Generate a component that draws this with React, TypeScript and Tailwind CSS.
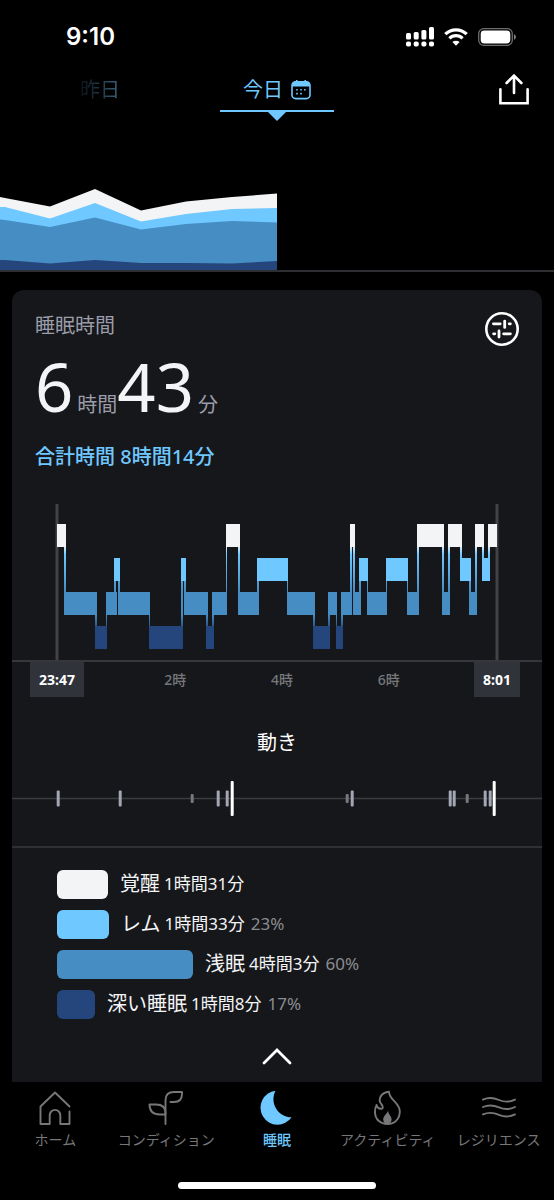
/** Sleep detail screen: day switcher, trend strip, hypnogram, movement and stage totals. */
import { clsx } from "clsx";

type Stage = "awake" | "rem" | "light" | "deep";

const STAGE_ROW: Record<Stage, number> = { awake: 0, rem: 1, light: 2, deep: 3 };

const STAGE_FILL: Record<Stage, string> = {
  awake: "fill-[#f3f4f6]",
  rem: "fill-[#6fc8ff]",
  light: "fill-[#458dc3]",
  deep: "fill-[#24467c]",
};

// [stage, start, end] on a 440 unit wide night
const SEGMENTS: Array<[Stage, number, number]> = [
  ["awake", 0, 9],
  ["light", 7, 40],
  ["deep", 38, 50],
  ["light", 49, 60],
  ["rem", 57, 63],
  ["light", 61, 93],
  ["deep", 92, 126],
  ["rem", 124, 129],
  ["light", 127, 151],
  ["deep", 149, 157],
  ["light", 155, 170],
  ["awake", 169, 183],
  ["light", 181, 202],
  ["rem", 200, 231],
  ["light", 230, 258],
  ["deep", 256, 273],
  ["light", 271, 280],
  ["deep", 279, 286],
  ["light", 284, 295],
  ["awake", 293, 298],
  ["light", 296, 304],
  ["rem", 302, 311],
  ["light", 310, 330],
  ["rem", 329, 351],
  ["light", 350, 362],
  ["awake", 360, 387],
  ["light", 385, 393],
  ["awake", 391, 405],
  ["rem", 403, 414],
  ["light", 412, 420],
  ["awake", 418, 427],
  ["rem", 425, 433],
  ["awake", 431, 440],
];

// [position, height]
const MOVEMENTS: Array<[number, number]> = [
  [1, 16],
  [63, 16],
  [135, 9],
  [161, 16],
  [170, 16],
  [175, 35],
  [290, 9],
  [295, 16],
  [393, 16],
  [397, 16],
  [410, 9],
  [428, 16],
  [433, 16],
  [437, 35],
];

const TOTALS = [
  { label: "覚醒", time: "1時間31分", minutes: 91, percent: "", color: "bg-[#f3f4f6]" },
  { label: "レム", time: "1時間33分", minutes: 93, percent: "23%", color: "bg-[#6fc8ff]" },
  { label: "浅眠", time: "4時間3分", minutes: 243, percent: "60%", color: "bg-[#458dc3]" },
  { label: "深い睡眠", time: "1時間8分", minutes: 68, percent: "17%", color: "bg-[#24467c]" },
];

function StatusBar() {
  return (
    <div className="flex h-[74px] items-center justify-between pr-[37px] pl-[66px]">
      <span className="font-['Inter',sans-serif] text-2xl font-semibold text-white">9:10</span>
      <div className="flex items-center gap-2.5 text-white">
        <svg width="28" height="20" viewBox="0 0 28 20" fill="currentColor">
          <rect x="0" y="6" width="5" height="6.5" rx="1.5" />
          <rect x="7.7" y="5" width="5" height="7.5" rx="1.5" />
          <rect x="15.4" y="3" width="5" height="9.5" rx="1.5" />
          <rect x="23" y="0" width="5" height="12.5" rx="1.5" />
          <rect x="0" y="14.5" width="5" height="5" rx="1.8" />
          <rect x="7.7" y="14.5" width="5" height="5" rx="1.8" />
          <rect x="15.4" y="14.5" width="5" height="5" rx="1.8" />
          <rect x="23" y="14.5" width="5" height="5" rx="1.8" />
        </svg>
        <svg width="24" height="18" viewBox="0 0 24 18" fill="none" stroke="currentColor" strokeWidth="3.2">
          <path d="M1.3 6.2a15.3 15.3 0 0 1 21.4 0" />
          <path d="M5.4 10.4a9.4 9.4 0 0 1 13.2 0" />
          <path d="M12 17.8l-3.6-3.7a5.2 5.2 0 0 1 7.2 0z" fill="currentColor" stroke="none" />
        </svg>
        <svg width="39" height="18" viewBox="0 0 39 18">
          <rect x="0.7" y="0.7" width="33.6" height="16.6" rx="5" fill="none" stroke="#6d6d6d" strokeWidth="1.3" />
          <rect x="2.7" y="2.6" width="29.6" height="12.8" rx="3.4" fill="currentColor" />
          <path d="M36 6.3c2.6 0.9 2.6 4.5 0 5.4z" fill="#7d7d7d" />
        </svg>
      </div>
    </div>
  );
}

function DayHeader() {
  return (
    <header className="grid grid-cols-[1fr_114px_1fr] items-start">
      <div className="flex justify-end pr-[100px]">
        <button
          type="button"
          className="h-8 bg-linear-to-r from-[#0a1318] to-[#39647f] bg-clip-text text-xl leading-8 text-transparent"
        >
          昨日
        </button>
      </div>
      <div className="flex flex-col items-center text-[#6fc8ff]">
        <button
          type="button"
          className="flex h-[38px] w-full items-center justify-center gap-2 border-b-2 border-current pb-1 text-xl"
        >
          今日
          <svg width="20" height="20" viewBox="0 0 20 20" fill="none" stroke="currentColor" strokeWidth="1.6">
            <rect x="1" y="1.8" width="18" height="16.8" rx="3.6" />
            <path d="M1 5.4A3.8 3.8 0 0 1 4.8 1.6h10.4A3.8 3.8 0 0 1 19 5.4V6.4H1z" fill="currentColor" stroke="none" />
            <path d="M5.8 0.6v3M14.2 0.6v3" strokeLinecap="round" />
            <path d="M9.2 9.8h1.6M13 9.8h1.6M5.2 9.8h1.6M9.2 13.6h1.6M5.2 13.6h1.6" />
          </svg>
        </button>
        <svg width="18" height="9" viewBox="0 0 18 9" fill="currentColor">
          <path d="M0 0h18L9 9z" />
        </svg>
      </div>
      <div className="flex justify-end pr-[25px]">
        <button type="button" aria-label="共有" className="text-white">
          <svg width="30" height="31" viewBox="0 0 30 31" fill="none" stroke="currentColor" strokeWidth="2.6" strokeLinecap="round">
            <path d="M1.4 15.2V29.2H28.6V15.2" />
            <path d="M15 19V1.8M7.6 9L15 1.6L22.4 9" />
          </svg>
        </button>
      </div>
    </header>
  );
}

function TrendChart() {
  return (
    <div className="mt-[67px] border-b-2 border-[#2d2e32]">
      <svg className="block h-[82px] w-1/2" viewBox="0 0 277 82" preserveAspectRatio="none">
        <path className="fill-[#f3f4f6]" d="M0 9L5 10L50 18.5L95 1L141 22.5L186 13.5L232 9L277 5.5V82H0z" />
        <path className="fill-[#6fc8ff]" d="M0 19L5 19L50 30.5L95 15L141 33.5L186 26L232 21L277 20V82H0z" />
        <path className="fill-[#458dc3]" d="M0 31.5L5 32L50 39L95 29.5L141 41.5L186 36L232 33L277 34.5V82H0z" />
        <path className="fill-[#24467c]" d="M0 72L5 72L50 75.5L95 72L141 75L186 75L232 75.5L277 73V82H0z" />
      </svg>
    </div>
  );
}

function Hypnogram() {
  const rowTop = (stage: Stage) => 24 + STAGE_ROW[stage] * 34;

  return (
    <svg className="mt-[29px] block h-40 w-full" viewBox="-45 0 530 160" preserveAspectRatio="none">
      <defs>
        <linearGradient id="link" gradientUnits="userSpaceOnUse" x1="0" y1="24" x2="0" y2="150">
          <stop offset="0.17" stopColor="#f3f4f6" />
          <stop offset="0.24" stopColor="#6fc8ff" />
          <stop offset="0.54" stopColor="#458dc3" />
          <stop offset="0.72" stopColor="#458dc3" />
          <stop offset="0.84" stopColor="#24467c" />
        </linearGradient>
      </defs>
      <path d="M0 4V160M440 4V160" stroke="#424347" strokeWidth="3" />
      {SEGMENTS.slice(1).map(([stage, start], i) => {
        const [prevStage, , prevEnd] = SEGMENTS[i];
        const top = Math.min(rowTop(stage), rowTop(prevStage)) + 23;
        const bottom = Math.max(rowTop(stage), rowTop(prevStage));
        return (
          <rect
            key={start}
            x={start}
            y={top}
            width={Math.min(prevEnd - start, 2)}
            height={bottom - top}
            fill="url(#link)"
          />
        );
      })}
      {SEGMENTS.map(([stage, start, end]) => (
        <rect key={start} className={STAGE_FILL[stage]} x={start} y={rowTop(stage)} width={end - start} height="23" />
      ))}
    </svg>
  );
}

function TimeAxis() {
  return (
    <div className="flex border-t-2 border-[#36373b] pr-[22px] pl-[18px] text-sm leading-[35px]">
      <span className="w-[54px] bg-[#31333b] text-center font-bold text-white">23:47</span>
      <div className="grid flex-1 grid-cols-3 pr-8 pl-[38px] text-center font-medium text-[#77787c]">
        <span>2時</span>
        <span>4時</span>
        <span>6時</span>
      </div>
      <span className="w-[46px] bg-[#31333b] text-center font-bold text-white">8:01</span>
    </div>
  );
}

function Movement() {
  return (
    <section className="border-b-2 border-[#2f3034] pb-[29px]">
      <h2 className="mt-8 text-center text-xl leading-7 text-white">動き</h2>
      <svg className="mt-[23px] block h-[37px] w-full" viewBox="-45 0 530 37" preserveAspectRatio="none">
        <path d="M-45 18.5H485" stroke="#3c3d41" strokeWidth="1.4" />
        {MOVEMENTS.map(([x, height]) => (
          <rect
            key={x}
            className={clsx(
              height > 30 ? "fill-white" : height > 10 ? "fill-[#a3a6b4]" : "fill-[#77787e]",
            )}
            x={x - 1.3}
            y={18.5 - height / 2}
            width="3"
            height={height}
            rx="1"
          />
        ))}
      </svg>
    </section>
  );
}

function StageTotals() {
  return (
    <ul className="pt-4 pl-[45px]">
      {TOTALS.map((t) => (
        <li key={t.label} className="flex h-10 items-center gap-3">
          <span
            className={clsx("h-[29px] rounded-md", t.color)}
            style={{ width: Math.round(t.minutes * 0.56) }}
          />
          <p className="flex items-center gap-1 text-[17px] text-[#f3f4f6]">
            <span className="text-xl">{t.label}</span>
            <span>{t.time}</span>
            {t.percent && <span className="pl-0.5 text-[#8b8c91]">{t.percent}</span>}
          </p>
        </li>
      ))}
    </ul>
  );
}

const NAV_ITEMS = [
  {
    label: "ホーム",
    icon: <path d="M32.5 16.5L18 2.5L3.5 16.5V34H12.7V25.2a5.3 5.3 0 0 1 10.6 0V34H32.5V21.5" />,
  },
  {
    label: "コンディション",
    icon: (
      <>
        <path d="M17.5 34V10.5Q17.5 2 26 2H34V4Q34 12 26 12H22.5" />
        <path d="M17.5 24.5H12Q1.5 24.5 1.5 14.5H8Q17.5 14.5 17.5 23" />
      </>
    ),
  },
  {
    label: "睡眠",
    active: true,
    icon: (
      <path
        d="M16.5 0.8A17 17 0 1 0 32.6 27.2A18 18 0 0 1 16.5 0.8z"
        fill="currentColor"
        stroke="none"
      />
    ),
  },
  {
    label: "アクティビティ",
    icon: (
      <>
        <path d="M19 1.8C10 2.8 8 10 11.2 13.8Q13.4 16.4 12.4 18.6Q7.6 19.4 6.6 15Q5 18 5 22C5 29.5 10.5 34 17.5 34C24.5 34 29.8 29 29.8 21.5C29.8 12 19.2 10.5 19 1.8z" />
        <path
          d="M18 20.5C17 24.5 13.2 25.6 13.2 29.5C13.2 32 15 34 17.4 34C20 34 21.6 32 21.6 29.4C21.6 26 18.4 24.6 18 20.5z"
          fill="currentColor"
          stroke="none"
        />
      </>
    ),
  },
  {
    label: "レジリエンス",
    icon: (
      <path d="M2 9.6C8 7 12 7.4 18 10S28 12.6 34 9.6M2 17C8 14.4 12 14.8 18 17.4S28 20 34 17M2 24.4C8 21.8 12 22.2 18 24.8S28 27.4 34 24.4" />
    ),
  },
];

function BottomNav() {
  return (
    <nav className="grid grid-cols-5 pt-2">
      {NAV_ITEMS.map((item) => (
        <a
          key={item.label}
          href="#"
          className={clsx(
            "flex flex-col items-center text-sm whitespace-nowrap",
            item.active ? "font-medium text-[#6fc8ff]" : "text-[#77777a]",
          )}
        >
          <svg
            width="36"
            height="36"
            viewBox="0 0 36 36"
            fill="none"
            stroke="currentColor"
            strokeWidth="1.9"
            strokeLinecap="round"
            strokeLinejoin="round"
          >
            {item.icon}
          </svg>
          <span className="mt-1 leading-5">{item.label}</span>
        </a>
      ))}
    </nav>
  );
}

export default function App() {
  return (
    <div className="min-h-screen bg-black font-['Noto_Sans','Noto_Sans_CJK_JP',sans-serif]" lang="ja">
      <StatusBar />
      <DayHeader />
      <TrendChart />

      <main className="mx-3 mt-[18px] rounded-t-xl bg-[#16171a]">
        <div className="flex items-start justify-between px-[23px] pt-[22px]">
          <h1 className="text-xl leading-7 text-[#9b9dab]">睡眠時間</h1>
          <button type="button" aria-label="表示設定" className="text-white">
            <svg width="34" height="34" viewBox="0 0 34 34" fill="none" stroke="currentColor" strokeWidth="2.6">
              <circle cx="17" cy="17" r="15.7" />
              <path
                d="M8.4 11.8H15.2M19.7 9.2V15.4M24.2 11.8H25.4M8.6 21.8H9.8M14 19V25M18.6 21.8H25.4"
                strokeLinecap="round"
                strokeWidth="2.8"
              />
            </svg>
          </button>
        </div>
        <p className="mt-1 flex items-baseline gap-1 px-[23px] text-xl text-[#9b9dab]">
          <span className="text-[67px] leading-[72px] text-[#f3f4f6]">6</span>
          <span>
            時間<span className="text-[67px] leading-[72px] text-[#f3f4f6]">43</span>
          </span>
          <span>分</span>
        </p>
        <p className="mt-[21px] px-[23px] text-xl leading-7 font-medium text-[#6fc8ff]">合計時間 8時間14分</p>

        <Hypnogram />
        <TimeAxis />
        <Movement />
        <StageTotals />

        <button type="button" aria-label="閉じる" className="flex h-[58px] w-full items-center justify-center pt-1.5 text-white">
          <svg width="30" height="17" viewBox="0 0 30 17" fill="none" stroke="currentColor" strokeWidth="2.8" strokeLinecap="round">
            <path d="M2 15L15 2L28 15" />
          </svg>
        </button>
      </main>

      <BottomNav />
      <div className="mx-auto mt-8 h-[7px] w-[198px] rounded-full bg-white" />
    </div>
  );
}
